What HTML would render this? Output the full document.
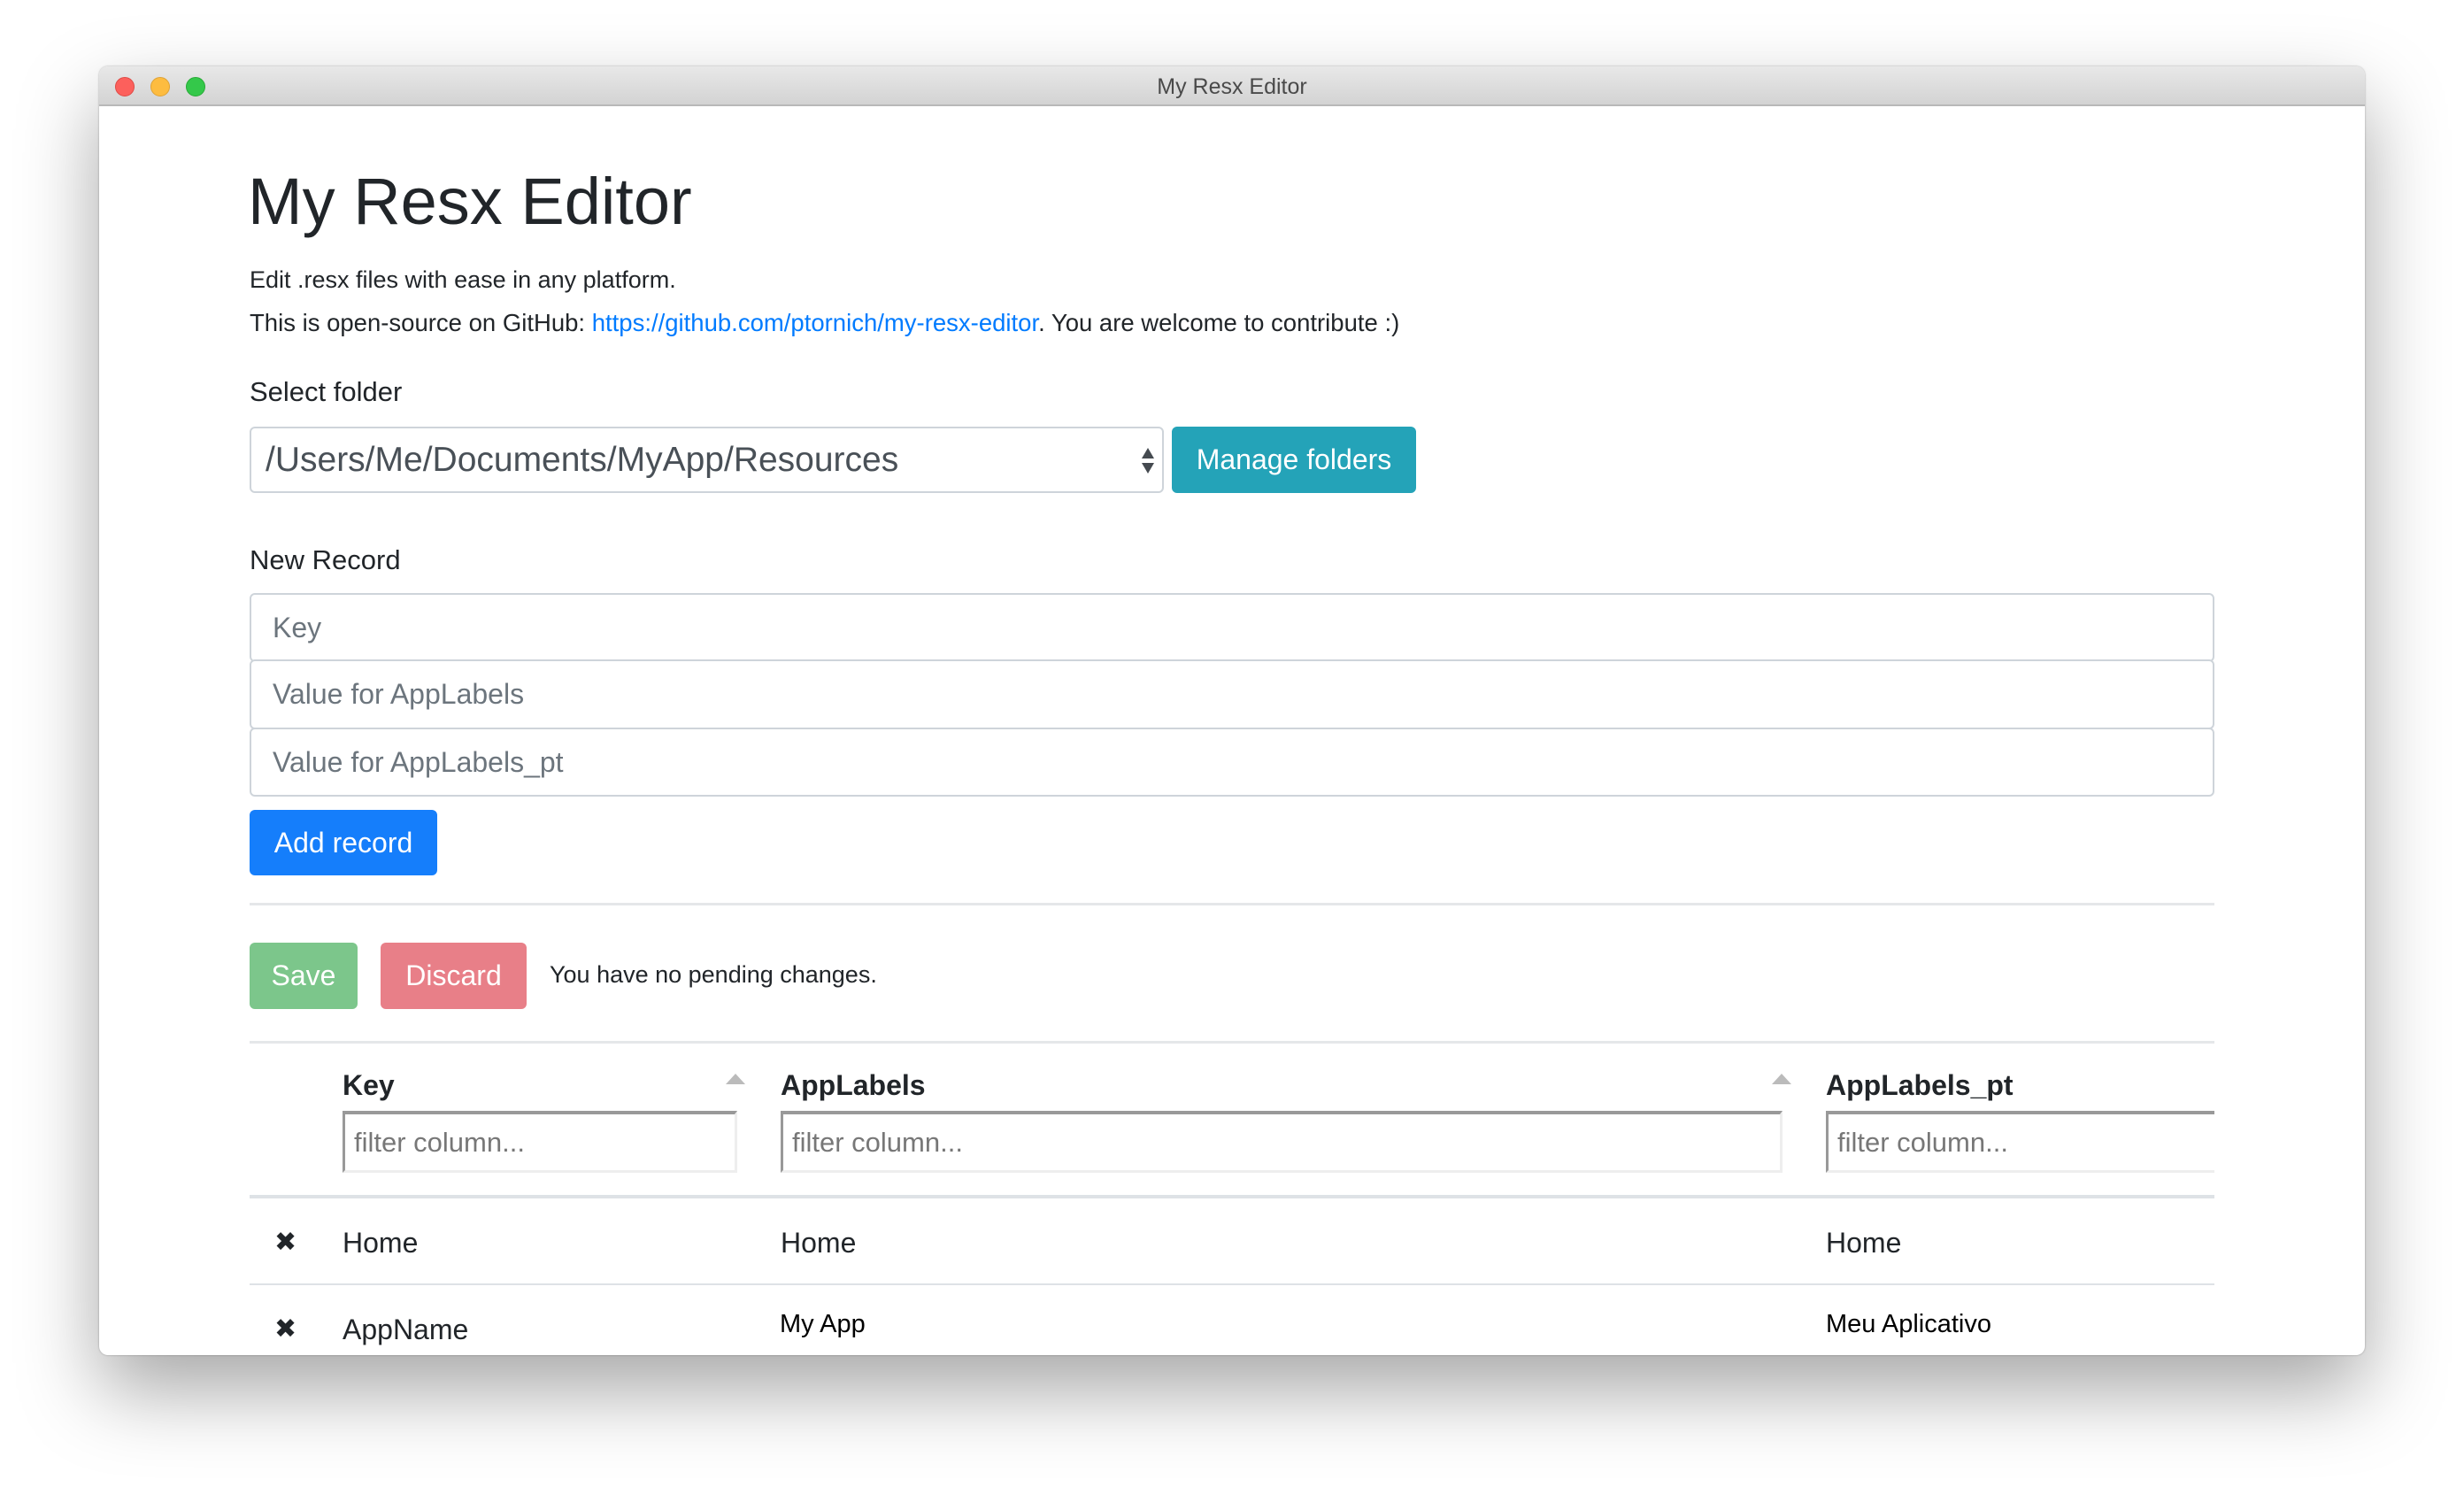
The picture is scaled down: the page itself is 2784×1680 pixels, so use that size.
<!DOCTYPE html>
<html><head><meta charset="utf-8"><style>
*{box-sizing:border-box;margin:0;padding:0}
body{width:2784px;height:1680px;background:#fff;position:relative;overflow:hidden;font-family:"Liberation Sans",sans-serif;color:#212529}
.win{position:absolute;left:112px;top:75px;width:2560px;height:1456px;background:#fff;border-radius:10px;overflow:hidden;box-shadow:0 40px 90px rgba(0,0,0,.35),0 0 2px rgba(0,0,0,.3)}
.tb{position:absolute;left:0;top:0;width:100%;height:45px;background:linear-gradient(#e8e8e8,#d3d3d3);border-bottom:2px solid #b8b8b8}
.dot{position:absolute;top:12px;width:22px;height:22px;border-radius:50%}
.a{position:absolute;white-space:nowrap}
.inp{position:absolute;border:2px solid #ced4da;border-radius:6px;background:#fff;color:#6c757d;font-size:32px;padding-left:24px;display:flex;align-items:center}
.btn{position:absolute;border-radius:6px;color:#fff;font-size:32px;display:flex;align-items:center;justify-content:center}
.f{position:absolute;top:1180px;height:70px;border-top:4px solid #999;border-left:3px solid #999;border-bottom:3px solid #eee;border-right:3px solid #eee;color:#777;font-size:31px;padding-left:10px;display:flex;align-items:center}
.th{position:absolute;top:1133px;font-weight:bold;font-size:32px}
.td{position:absolute;font-size:32px}
.tri{position:absolute;top:1138px;width:0;height:0;border-left:11px solid transparent;border-right:11px solid transparent;border-bottom:12px solid #bbb}
</style></head><body>
<div class="win">
<div class="tb">
<div class="dot" style="left:18px;background:#fc605c;border:1px solid #de4a45"></div>
<div class="dot" style="left:58px;background:#fdbc40;border:1px solid #dea236"></div>
<div class="dot" style="left:98px;background:#34c84a;border:1px solid #27aa35"></div>
<div class="a" style="left:0;width:100%;text-align:center;top:9px;font-size:25px;color:#4a4a4a">My Resx Editor</div>
</div>
<div class="a" style="left:168px;top:110px;font-size:74px;font-weight:500;color:#212529">My Resx Editor</div>
<div class="a" style="left:170px;top:226px;font-size:27px">Edit .resx files with ease in any platform.</div>
<div class="a" style="left:170px;top:274px;font-size:27.5px">This is open-source on GitHub: <span style="color:#007bff">https://github.com/ptornich/my-resx-editor</span>. You are welcome to contribute :)</div>
<div class="a" style="left:170px;top:350px;font-size:31px">Select folder</div>
<div class="inp" style="left:170px;top:407px;width:1033px;height:75px;color:#495057;font-size:39px;padding-left:16px">/Users/Me/Documents/MyApp/Resources
<svg style="position:absolute;right:8px;top:22px" width="16" height="30"><path d="M8 0L15 12H1Z M1 17H15L8 29Z" fill="#454a50"/></svg></div>
<div class="btn" style="left:1212px;top:407px;width:276px;height:75px;background:#24a3b8">Manage folders</div>
<div class="a" style="left:170px;top:540px;font-size:31px">New Record</div>
<div class="inp" style="left:170px;top:595px;width:2220px;height:78px">Key</div>
<div class="inp" style="left:170px;top:670px;width:2220px;height:79px">Value for AppLabels</div>
<div class="inp" style="left:170px;top:747px;width:2220px;height:78px">Value for AppLabels_pt</div>
<div class="btn" style="left:170px;top:840px;width:212px;height:74px;background:#157efb">Add record</div>
<div class="a" style="left:170px;top:945px;width:2220px;height:3px;background:#e5e7e9"></div>
<div class="btn" style="left:170px;top:990px;width:122px;height:75px;background:#7cc68b">Save</div>
<div class="btn" style="left:318px;top:990px;width:165px;height:75px;background:#e87f88">Discard</div>
<div class="a" style="left:509px;top:1011px;font-size:27px">You have no pending changes.</div>
<div class="a" style="left:170px;top:1101px;width:2220px;height:3px;background:#e5e7e9"></div>
<div class="th" style="left:275px">Key</div>
<div class="th" style="left:770px">AppLabels</div>
<div class="th" style="left:1951px">AppLabels_pt</div>
<div class="tri" style="left:708px"></div>
<div class="tri" style="left:1890px"></div>
<div class="f" style="left:275px;width:446px">filter column...</div>
<div class="f" style="left:770px;width:1132px">filter column...</div>
<div class="f" style="left:1951px;width:439px;border-right:none">filter column...</div>
<div class="a" style="left:170px;top:1275px;width:2220px;height:4px;background:#dee2e6"></div>
<div class="td" style="left:198px;top:1311px;font-size:30px">✖</div>
<div class="td" style="left:275px;top:1311px">Home</div>
<div class="td" style="left:770px;top:1311px">Home</div>
<div class="td" style="left:1951px;top:1311px">Home</div>
<div class="a" style="left:170px;top:1375px;width:2220px;height:2px;background:#dee2e6"></div>
<div class="td" style="left:198px;top:1409px;font-size:30px">✖</div>
<div class="td" style="left:275px;top:1409px">AppName</div>
<div class="td" style="left:769px;top:1405px;font-size:29px;color:#000">My App</div>
<div class="td" style="left:1951px;top:1405px;font-size:29px;color:#000">Meu Aplicativo</div>
</div>
</body></html>
